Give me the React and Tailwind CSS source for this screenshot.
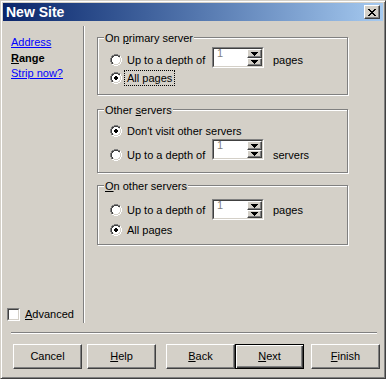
import React from "react";

const OUTER = {0:[4,5,6,7],1:[2,3,8,9],2:[1,10],3:[1,10],4:[0,11],5:[0,11],6:[0,11],7:[0,11],8:[1,10],9:[1,10],10:[2,3,8,9],11:[4,5,6,7]};
const INNER = {1:[4,5,6,7],2:[2,3,8,9],3:[2,9],4:[1,10],5:[1,10],6:[1,10],7:[1,10],8:[2,9],9:[2,3,8,9],10:[4,5,6,7]};
const FILL = {2:[4,7],3:[3,8],4:[2,9],5:[2,9],6:[2,9],7:[2,9],8:[3,8],9:[4,7]};
const DOT = {4:[5,6],5:[4,7],6:[4,7],7:[5,6]};

function Radio({ checked }) {
  const rects = [];
  for (const [r, [a, b]] of Object.entries(FILL)) for (let c = a; c <= b; c++) rects.push([c, +r, "#ffffff"]);
  for (const [r, cols] of Object.entries(OUTER)) for (const c of cols) rects.push([c, +r, +r + c < 11 ? "#808080" : "#ffffff"]);
  for (const [r, cols] of Object.entries(INNER)) for (const c of cols) rects.push([c, +r, +r + c <= 11 ? "#404040" : "#d4d0c8"]);
  if (checked) for (const [r, [a, b]] of Object.entries(DOT)) for (let c = a; c <= b; c++) rects.push([c, +r, "#000000"]);
  return (
    <svg width="12" height="12" viewBox="0 0 12 12" shapeRendering="crispEdges" className="shrink-0 block">
      {rects.map(([x, y, f], i) => (
        <rect key={i} x={x} y={y} width="1" height="1" fill={f} />
      ))}
    </svg>
  );
}

function Arrow({ up }) {
  const rows = up ? [[3, 1], [2, 3], [1, 5], [0, 7]] : [[0, 7], [1, 5], [2, 3], [3, 1]];
  return (
    <svg width="7" height="4" viewBox="0 0 7 4" shapeRendering="crispEdges" className="block">
      {rows.map(([y, w], i) => (
        <rect key={i} x={(7 - w) / 2} y={y} width={w} height="1" fill="#000" />
      ))}
    </svg>
  );
}

function SpinBtn({ up }) {
  return (
    <div
      className={`${up ? "h-[9px]" : "h-[8px]"} w-[15px] flex items-center justify-center bg-[#d4d0c8] border border-t-white border-l-white border-b-[#404040] border-r-[#404040] shadow-[inset_-1px_-1px_0_#808080]`}
    >
      <Arrow up={up} />
    </div>
  );
}

function Spin({ className = "" }) {
  return (
    <div className={`w-[52px] h-[21px] shrink-0 border border-t-[#808080] border-l-[#808080] border-b-white border-r-white ${className}`}>
      <div className="h-full flex bg-white border border-t-[#404040] border-l-[#404040] border-b-[#d4d0c8] border-r-[#d4d0c8]">
        <span className="flex-1 pl-[3px] pt-[0px] leading-[9px] text-[#808080]">1</span>
        <div className="flex flex-col">
          <SpinBtn up />
          <SpinBtn />
        </div>
      </div>
    </div>
  );
}

function Group({ legend, className = "", children }) {
  return (
    <div className={`relative w-[251px] shrink-0 border border-[#808080] shadow-[inset_1px_1px_0_#fff,1px_1px_0_#fff] pl-[12px] ${className}`}>
      <span className="absolute top-[-6px] left-[6px] px-[1px] bg-[#d4d0c8] leading-[13px] whitespace-nowrap">{legend}</span>
      {children}
    </div>
  );
}

function Btn({ children, def, className = "" }) {
  return (
    <div
      className={`w-[69px] h-[25px] shrink-0 flex items-center justify-center leading-[13px] ${
        def
          ? "border border-black shadow-[inset_1px_1px_0_#fff,inset_-1px_-1px_0_#404040,inset_-2px_-2px_0_#808080]"
          : "border border-t-white border-l-white border-b-[#404040] border-r-[#404040] shadow-[inset_-1px_-1px_0_#808080]"
      } ${className}`}
    >
      {children}
    </div>
  );
}

function CloseBtn() {
  const rows = [
    "XX....XX",
    ".XX..XX.",
    "..XXXX..",
    "...XX...",
    "..XXXX..",
    ".XX..XX.",
    "XX....XX",
  ];
  return (
    <div className="w-[16px] h-[14px] bg-[#d4d0c8] border border-t-white border-l-white border-b-[#404040] border-r-[#404040] shadow-[inset_-1px_-1px_0_#808080] flex items-center justify-center">
      <svg width="8" height="7" viewBox="0 0 8 7" shapeRendering="crispEdges" className="block -ml-[1px]">
        {rows.flatMap((row, y) =>
          row.split("").map((ch, x) => (ch === "X" ? <rect key={`${x}-${y}`} x={x} y={y} width="1" height="1" fill="#000" /> : null))
        )}
      </svg>
    </div>
  );
}

export default function App() {
  return (
    <div className="w-[386px] h-[379px] overflow-hidden bg-[#d4d0c8] border border-t-[#d4d0c8] border-l-[#d4d0c8] border-b-[#404040] border-r-[#404040] shadow-[inset_1px_1px_0_#fff,inset_-1px_-1px_0_#808080] p-[2px] flex flex-col text-[11px] text-black font-['Liberation_Sans',Arial,sans-serif]">
      {/* Title bar */}
      <div className="h-[18px] shrink-0 flex items-center justify-between bg-linear-to-r from-[#0a246a] to-[#a6caf0] pl-[3px] pr-[3px]">
        <span className="text-white font-bold text-[14px] leading-[18px]">New Site</span>
        <CloseBtn />
      </div>

      {/* Main */}
      <div className="mt-[5px] h-[297px] shrink-0 flex">
        <div className="w-[80px] flex flex-col justify-between">
          <div className="pl-[8px] pt-[9px] flex flex-col leading-[15.5px]">
            <span className="text-[#0000ff] underline">Address</span>
            <span className="font-bold"><u>R</u>ange</span>
            <span className="text-[#0000ff] underline">Strip now?</span>
          </div>
          <div className="pl-[4px] pb-[2px] flex items-center gap-[5px]">
            <div className="w-[13px] h-[13px] shrink-0 border border-t-[#808080] border-l-[#808080] border-b-white border-r-white">
              <div className="w-full h-full bg-white border border-t-[#404040] border-l-[#404040] border-b-[#d4d0c8] border-r-[#d4d0c8]" />
            </div>
            <span className="leading-[13px]"><u>A</u>dvanced</span>
          </div>
        </div>
        <div className="w-[2px] border-l border-l-[#808080] border-r border-r-white" />
        <div className="pl-[12px] pt-[11px] flex flex-col">
          <Group legend={<>On <u>p</u>rimary server</>} className="h-[58px] pt-[13px]">
            <div className="h-[18px] flex items-center">
              <Radio />
              <span className="ml-[5px] w-[85px] leading-[13px]">Up to a depth of</span>
              <Spin className="-mt-[5px]" />
              <span className="ml-[9px] leading-[13px]">pages</span>
            </div>
            <div className="h-[18px] flex items-center">
              <Radio checked />
              <span className="ml-[2px] px-[2px] border border-dotted border-black leading-[14px]">All pages</span>
            </div>
          </Group>

          <Group legend={<>Other <u>s</u>ervers</>} className="mt-[14px] h-[64px] pt-[11px]">
            <div className="h-[20px] flex items-center">
              <Radio checked />
              <span className="ml-[5px] leading-[13px]">Don't visit other servers</span>
            </div>
            <div className="mt-[4px] h-[20px] flex items-center">
              <Radio />
              <span className="ml-[5px] w-[85px] leading-[13px]">Up to a depth of</span>
              <Spin className="-mt-[11px]" />
              <span className="ml-[9px] leading-[13px]">servers</span>
            </div>
          </Group>

          <Group legend={<><u>O</u>n other servers</>} className="mt-[12px] h-[60px] pt-[14px]">
            <div className="h-[20px] flex items-center">
              <Radio />
              <span className="ml-[5px] w-[85px] leading-[13px]">Up to a depth of</span>
              <Spin className="-mt-[1px]" />
              <span className="ml-[9px] leading-[13px]">pages</span>
            </div>
            <div className="h-[20px] flex items-center">
              <Radio checked />
              <span className="ml-[5px] leading-[13px]">All pages</span>
            </div>
          </Group>
        </div>
      </div>

      {/* Separator */}
      <div className="mt-[9px] ml-[8px] mr-[6px] h-[2px] shrink-0 border-t border-t-[#808080] border-b border-b-white" />

      {/* Buttons */}
      <div className="mt-[10px] ml-[10px] flex shrink-0">
        <Btn>Cancel</Btn>
        <Btn className="ml-[5px]"><span><u>H</u>elp</span></Btn>
        <Btn className="ml-[10px]"><span><u>B</u>ack</span></Btn>
        <Btn def><span><u>N</u>ext</span></Btn>
        <Btn className="ml-[7px]"><span><u>F</u>inish</span></Btn>
      </div>
    </div>
  );
}
